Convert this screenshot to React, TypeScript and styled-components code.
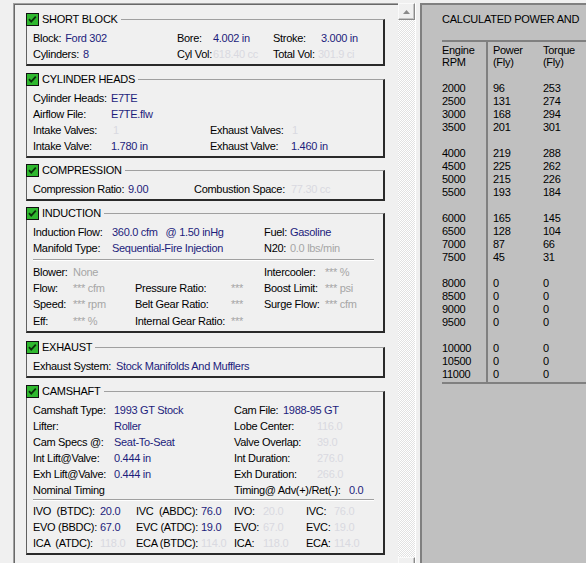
import React from "react";
import styled, { createGlobalStyle } from "styled-components";

type Tone = "on" | "off" | "dim";

const toneColor: Record<Tone, string> = {
  on: "#1d1d7c",
  off: "#d9d9e0",
  dim: "#a6a6a6",
};

const GlobalStyle = createGlobalStyle`
  html, body {
    margin: 0;
    padding: 0;
    background: #f0f0f0;
    overflow: hidden;
  }
  body {
    font-family: "Liberation Sans", Arial, sans-serif;
    font-size: 11px;
    letter-spacing: -0.3px;
    color: #000;
  }
`;

const Window = styled.div`
  display: flex;
  align-items: flex-start;
  height: 563px;
  padding-top: 3px;
  box-sizing: border-box;
  overflow: hidden;
`;

// left side: the engine spec sheet
const SpecsFrame = styled.div`
  width: 385px;
  height: 600px;
  flex-shrink: 0;
  box-sizing: border-box;
  margin-left: 13px;
  padding: 9px 13px 0 12px;
  border-top: 1px solid #a0a0a0;
  border-left: 1px solid #a0a0a0;
  box-shadow: inset 1px 1px 0 #696969;
  display: flex;
  flex-direction: column;
`;

const ScrollBar = styled.div`
  width: 17px;
  height: 571px;
  flex-shrink: 0;
  display: flex;
  flex-direction: column;
  justify-content: space-between;
  border-right: 1px solid #fff;
  background: repeating-conic-gradient(#ffffff 0 25%, #e2e2e2 0 50%) 0 0 / 2px 2px;
`;

const ScrollButton = styled.div`
  height: 17px;
  box-sizing: border-box;
  background: #f0f0f0;
  border: 1px solid;
  border-color: #fafafa #8a8a8a #8a8a8a #fafafa;
  box-shadow: inset -1px -1px 0 #c4c4c4;
  display: flex;
  align-items: center;
  justify-content: center;
`;

const Group = styled.section<{ $space: number }>`
  margin-top: ${(p) => p.$space}px;
`;

const GroupHead = styled.div`
  display: flex;
  align-items: center;
  height: 13px;
`;

const GroupTitle = styled.span`
  line-height: 13px;
  margin: 0 3px 0 3px;
  letter-spacing: -0.25px;
  white-space: nowrap;
`;

const HeadRule = styled.div`
  flex: 1;
  align-self: stretch;
  margin-top: 6px;
  border-top: 1px solid #a0a0a0;
  border-right: 2px solid #2a2a2a;
`;

const GroupBody = styled.div`
  border-left: 1px solid #606060;
  border-right: 2px solid #2a2a2a;
  border-bottom: 2px solid #2a2a2a;
  padding: 4px 9px 2px 6px;
`;

const Row = styled.div<{ $cols?: string; $h?: number }>`
  display: grid;
  grid-template-columns: ${(p) => p.$cols ?? "1fr"};
  height: ${(p) => p.$h ?? 16}px;
  line-height: ${(p) => p.$h ?? 16}px;
  white-space: pre;
`;

const Divider = styled.div<{ $before: number; $after: number }>`
  margin: ${(p) => p.$before}px 0 ${(p) => p.$after}px;
  border-top: 1px solid #a0a0a0;
  border-bottom: 1px solid #ffffff;
`;

const FieldWrap = styled.div`
  display: flex;
`;

const Label = styled.span<{ $w?: number }>`
  flex-shrink: 0;
  ${(p) => (p.$w ? `width: ${p.$w}px;` : "margin-right: 4px;")}
`;

const Value = styled.span<{ $tone: Tone }>`
  color: ${(p) => toneColor[p.$tone]};
`;

const At = styled.span`
  margin-left: 8px;
`;

// right side: calculated power table
const ResultsPanel = styled.div`
  flex: 1;
  height: 600px;
  margin-left: 4px;
  background: #c0c0c0;
  border-top: 2px solid #808080;
  border-left: 2px solid #808080;
  padding: 8px 0 0 20px;
  overflow: hidden;
  white-space: nowrap;
`;

const PanelTitle = styled.div`
  line-height: 13px;
  letter-spacing: -0.25px;
`;

const Table = styled.div`
  display: flex;
  margin-top: 14px;
  border-top: 2px solid #808080;
  border-bottom: 2px solid #808080;
`;

const Col = styled.div<{ $w?: number; $divider?: boolean; $pad?: number }>`
  box-sizing: border-box;
  ${(p) => (p.$w ? `width: ${p.$w}px; flex-shrink: 0;` : "flex: 1;")}
  ${(p) => (p.$divider ? "border-right: 2px solid #808080;" : "")}
  padding-left: ${(p) => p.$pad ?? 0}px;
`;

const ColHead = styled.div`
  padding-top: 2px;
  line-height: 12px;
`;

const ColData = styled.div`
  padding: 14px 0 1px;
  line-height: 13px;
`;

const Check = () => (
  <svg width="13" height="13" viewBox="0 0 13 13" style={{ flexShrink: 0 }}>
    <rect x="0.5" y="0.5" width="12" height="12" fill="#2fb82f" stroke="#111" />
    <polyline
      points="3,6.2 5.2,8.6 9.8,3.6"
      fill="none"
      stroke="#0b2e0b"
      strokeWidth="1.8"
    />
  </svg>
);

const Field = ({
  label,
  value,
  w,
  tone = "on",
}: {
  label: string;
  value?: React.ReactNode;
  w?: number;
  tone?: Tone;
}) => (
  <FieldWrap>
    <Label $w={w}>{label}</Label>
    {value !== undefined && <Value $tone={tone}>{value}</Value>}
  </FieldWrap>
);

const SpecGroup = ({
  title,
  space = 7,
  children,
}: {
  title: string;
  space?: number;
  children: React.ReactNode;
}) => (
  <Group $space={space}>
    <GroupHead>
      <Check />
      <GroupTitle>{title}</GroupTitle>
      <HeadRule />
    </GroupHead>
    <GroupBody>{children}</GroupBody>
  </Group>
);

const powerRows: string[][][] = [
  [
    ["2000", "96", "253"],
    ["2500", "131", "274"],
    ["3000", "168", "294"],
    ["3500", "201", "301"],
  ],
  [
    ["4000", "219", "288"],
    ["4500", "225", "262"],
    ["5000", "215", "226"],
    ["5500", "193", "184"],
  ],
  [
    ["6000", "165", "145"],
    ["6500", "128", "104"],
    ["7000", "87", "66"],
    ["7500", "45", "31"],
  ],
  [
    ["8000", "0", "0"],
    ["8500", "0", "0"],
    ["9000", "0", "0"],
    ["9500", "0", "0"],
  ],
  [
    ["10000", "0", "0"],
    ["10500", "0", "0"],
    ["11000", "0", "0"],
  ],
];

const columns = [
  { head: ["Engine", "RPM"], w: 46, divider: true, pad: 0 },
  { head: ["Power", "(Fly)"], w: 55, divider: false, pad: 5 },
  { head: ["Torque", "(Fly)"], w: undefined, divider: false, pad: 0 },
];

const columnLines = (idx: number) => {
  const lines: string[] = [];
  powerRows.forEach((group, g) => {
    if (g > 0) lines.push("\u00a0");
    group.forEach((r) => lines.push(r[idx]));
  });
  return lines;
};

const IND_ROW = 16.33;

export default function App() {
  return (
    <>
      <GlobalStyle />
      <Window>
        <SpecsFrame>
          <SpecGroup title="SHORT BLOCK" space={0}>
            <Row $cols="144px 96px 1fr">
              <Field label="Block:" value="Ford 302" />
              <Field label="Bore:" w={36} value="4.002 in" />
              <Field label="Stroke:" w={48} value="3.000 in" />
            </Row>
            <Row $cols="144px 96px 1fr">
              <Field label="Cylinders:" value="8" />
              <Field label="Cyl Vol:" w={36} value="618.40 cc" tone="off" />
              <Field label="Total Vol:" w={45} value="301.9 ci" tone="off" />
            </Row>
          </SpecGroup>

          <SpecGroup title="CYLINDER HEADS">
            <Row>
              <Field label="Cylinder Heads:" w={78} value="E7TE" />
            </Row>
            <Row>
              <Field label="Airflow File:" w={78} value="E7TE.flw" />
            </Row>
            <Row $cols="177px 1fr">
              <Field label="Intake Valves:" w={80} value="1" tone="off" />
              <Field label="Exhaust Valves:" w={82} value="1" tone="off" />
            </Row>
            <Row $cols="177px 1fr">
              <Field label="Intake Valve:" w={78} value="1.780 in" />
              <Field label="Exhaust Valve:" w={81} value="1.460 in" />
            </Row>
          </SpecGroup>

          <SpecGroup title="COMPRESSION" space={6}>
            <Row $cols="161px 1fr">
              <Field label="Compression Ratio:" w={95} value="9.00" />
              <Field label="Combustion Space:" w={97} value="77.30 cc" tone="off" />
            </Row>
          </SpecGroup>

          <SpecGroup title="INDUCTION" space={6}>
            <Row $cols="231px 1fr" $h={IND_ROW}>
              <Field
                label="Induction Flow:"
                w={79}
                value={
                  <>
                    360.0 cfm<At>@ 1.50 inHg</At>
                  </>
                }
              />
              <Field label="Fuel:" w={26} value="Gasoline" />
            </Row>
            <Row $cols="231px 1fr" $h={IND_ROW}>
              <Field label="Manifold Type:" w={79} value="Sequential-Fire Injection" />
              <Field label="N20:" w={26} value="0.0 lbs/min" tone="dim" />
            </Row>
            <Divider $before={2} $after={3} />
            <Row $cols="102px 129px 1fr" $h={IND_ROW}>
              <Field label="Blower:" w={40} value="None" tone="dim" />
              <div />
              <Field label="Intercooler:" w={61} value="*** %" tone="dim" />
            </Row>
            <Row $cols="102px 129px 1fr" $h={IND_ROW}>
              <Field label="Flow:" w={40} value="*** cfm" tone="dim" />
              <Field label="Pressure Ratio:" w={96} value="***" tone="dim" />
              <Field label="Boost Limit:" w={61} value="*** psi" tone="dim" />
            </Row>
            <Row $cols="102px 129px 1fr" $h={IND_ROW}>
              <Field label="Speed:" w={40} value="*** rpm" tone="dim" />
              <Field label="Belt Gear Ratio:" w={96} value="***" tone="dim" />
              <Field label="Surge Flow:" w={61} value="*** cfm" tone="dim" />
            </Row>
            <Row $cols="102px 129px 1fr" $h={IND_ROW}>
              <Field label="Eff:" w={40} value="*** %" tone="dim" />
              <Field label="Internal Gear Ratio:" w={96} value="***" tone="dim" />
            </Row>
          </SpecGroup>

          <SpecGroup title="EXHAUST" space={8}>
            <Row>
              <Field label="Exhaust System:" w={83} value="Stock Manifolds And Mufflers" />
            </Row>
          </SpecGroup>

          <SpecGroup title="CAMSHAFT">
            <Row $cols="201px 1fr">
              <Field label="Camshaft Type:" w={81} value="1993 GT Stock" />
              <Field label="Cam File:" w={49} value="1988-95 GT" />
            </Row>
            <Row $cols="201px 1fr">
              <Field label="Lifter:" w={81} value="Roller" />
              <Field label="Lobe Center:" w={83} value="116.0" tone="off" />
            </Row>
            <Row $cols="201px 1fr">
              <Field label="Cam Specs @:" w={81} value="Seat-To-Seat" />
              <Field label="Valve Overlap:" w={83} value="39.0" tone="off" />
            </Row>
            <Row $cols="201px 1fr">
              <Field label="Int Lift@Valve:" w={81} value="0.444 in" />
              <Field label="Int Duration:" w={83} value="276.0" tone="off" />
            </Row>
            <Row $cols="201px 1fr">
              <Field label="Exh Lift@Valve:" w={81} value="0.444 in" />
              <Field label="Exh Duration:" w={83} value="266.0" tone="off" />
            </Row>
            <Row $cols="201px 1fr">
              <Field label="Nominal Timing" />
              <Field label="Timing@ Adv(+)/Ret(-):" w={115} value="0.0" />
            </Row>
            <Divider $before={1} $after={2} />
            <Row $cols="103px 98px 72px 1fr">
              <Field label="IVO  (BTDC):" w={67} value="20.0" />
              <Field label="IVC  (ABDC):" w={65} value="76.0" />
              <Field label="IVO:" w={29} value="20.0" tone="off" />
              <Field label="IVC:" w={28} value="76.0" tone="off" />
            </Row>
            <Row $cols="103px 98px 72px 1fr">
              <Field label="EVO (BBDC):" w={67} value="67.0" />
              <Field label="EVC (ATDC):" w={65} value="19.0" />
              <Field label="EVO:" w={29} value="67.0" tone="off" />
              <Field label="EVC:" w={28} value="19.0" tone="off" />
            </Row>
            <Row $cols="103px 98px 72px 1fr">
              <Field label="ICA  (ATDC):" w={67} value="118.0" tone="off" />
              <Field label="ECA (BTDC):" w={65} value="114.0" tone="off" />
              <Field label="ICA:" w={29} value="118.0" tone="off" />
              <Field label="ECA:" w={28} value="114.0" tone="off" />
            </Row>
          </SpecGroup>
        </SpecsFrame>

        <ScrollBar>
          <ScrollButton>
            <svg width="7" height="4" viewBox="0 0 7 4">
              <polygon points="0,4 3.5,0 7,4" fill="#8a8a8a" />
            </svg>
          </ScrollButton>
          <ScrollButton />
        </ScrollBar>

        <ResultsPanel>
          <PanelTitle>CALCULATED POWER AND</PanelTitle>
          <Table>
            {columns.map((c, i) => (
              <Col key={c.head[0]} $w={c.w} $divider={c.divider} $pad={c.pad}>
                <ColHead>
                  <div>{c.head[0]}</div>
                  <div>{c.head[1]}</div>
                </ColHead>
                <ColData>
                  {columnLines(i).map((v, k) => (
                    <div key={k}>{v}</div>
                  ))}
                </ColData>
              </Col>
            ))}
          </Table>
        </ResultsPanel>
      </Window>
    </>
  );
}
